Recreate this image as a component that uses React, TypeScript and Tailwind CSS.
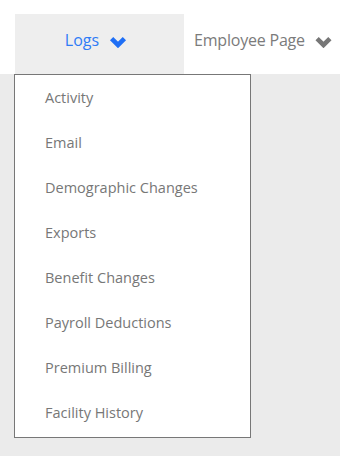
const items = [
  'Activity',
  'Email',
  'Demographic Changes',
  'Exports',
  'Benefit Changes',
  'Payroll Deductions',
  'Premium Billing',
  'Facility History',
];

function Chevron({ className }: { className: string }) {
  return (
    <svg viewBox="0 0 18 12" className={className} fill="none" stroke="currentColor">
      <polyline points="2.6,2.6 9,9 15.4,2.6" strokeWidth="4.6" strokeLinejoin="miter" />
    </svg>
  );
}

export default function App() {
  return (
    <div className="flex h-[456px] w-[340px] flex-col overflow-hidden bg-[#ebebeb] font-['Open_Sans',sans-serif]">
      {/* Top nav */}
      <div className="flex h-[74px] shrink-0 bg-white pl-[15px] pt-[14px]">
        <div className="flex h-[60px] w-[169px] items-center justify-center gap-[10px] bg-[#eeeeee] pb-[8px] pr-[7px]">
          <span className="text-[16px] text-[#2f7cf6]">Logs</span>
          <Chevron className="mt-[4px] h-[12px] w-[18px] text-[#1f6ff5]" />
        </div>
        <div className="flex h-[60px] items-center gap-[9px] pb-[8px] pl-[10px]">
          <span className="text-[16px] tracking-[-0.2px] text-[#7b7b7b]">Employee Page</span>
          <Chevron className="mt-[4px] h-[12px] w-[19px] text-[#777777]" />
        </div>
      </div>

      {/* Dropdown */}
      <div className="ml-[14px] w-[237px] border border-[#777777] bg-white pb-[2px]">
        {items.map((item) => (
          <div key={item} className="flex h-[45px] items-center pl-[30px] text-[14.5px] text-[#777777]">
            {item}
          </div>
        ))}
      </div>
    </div>
  );
}
